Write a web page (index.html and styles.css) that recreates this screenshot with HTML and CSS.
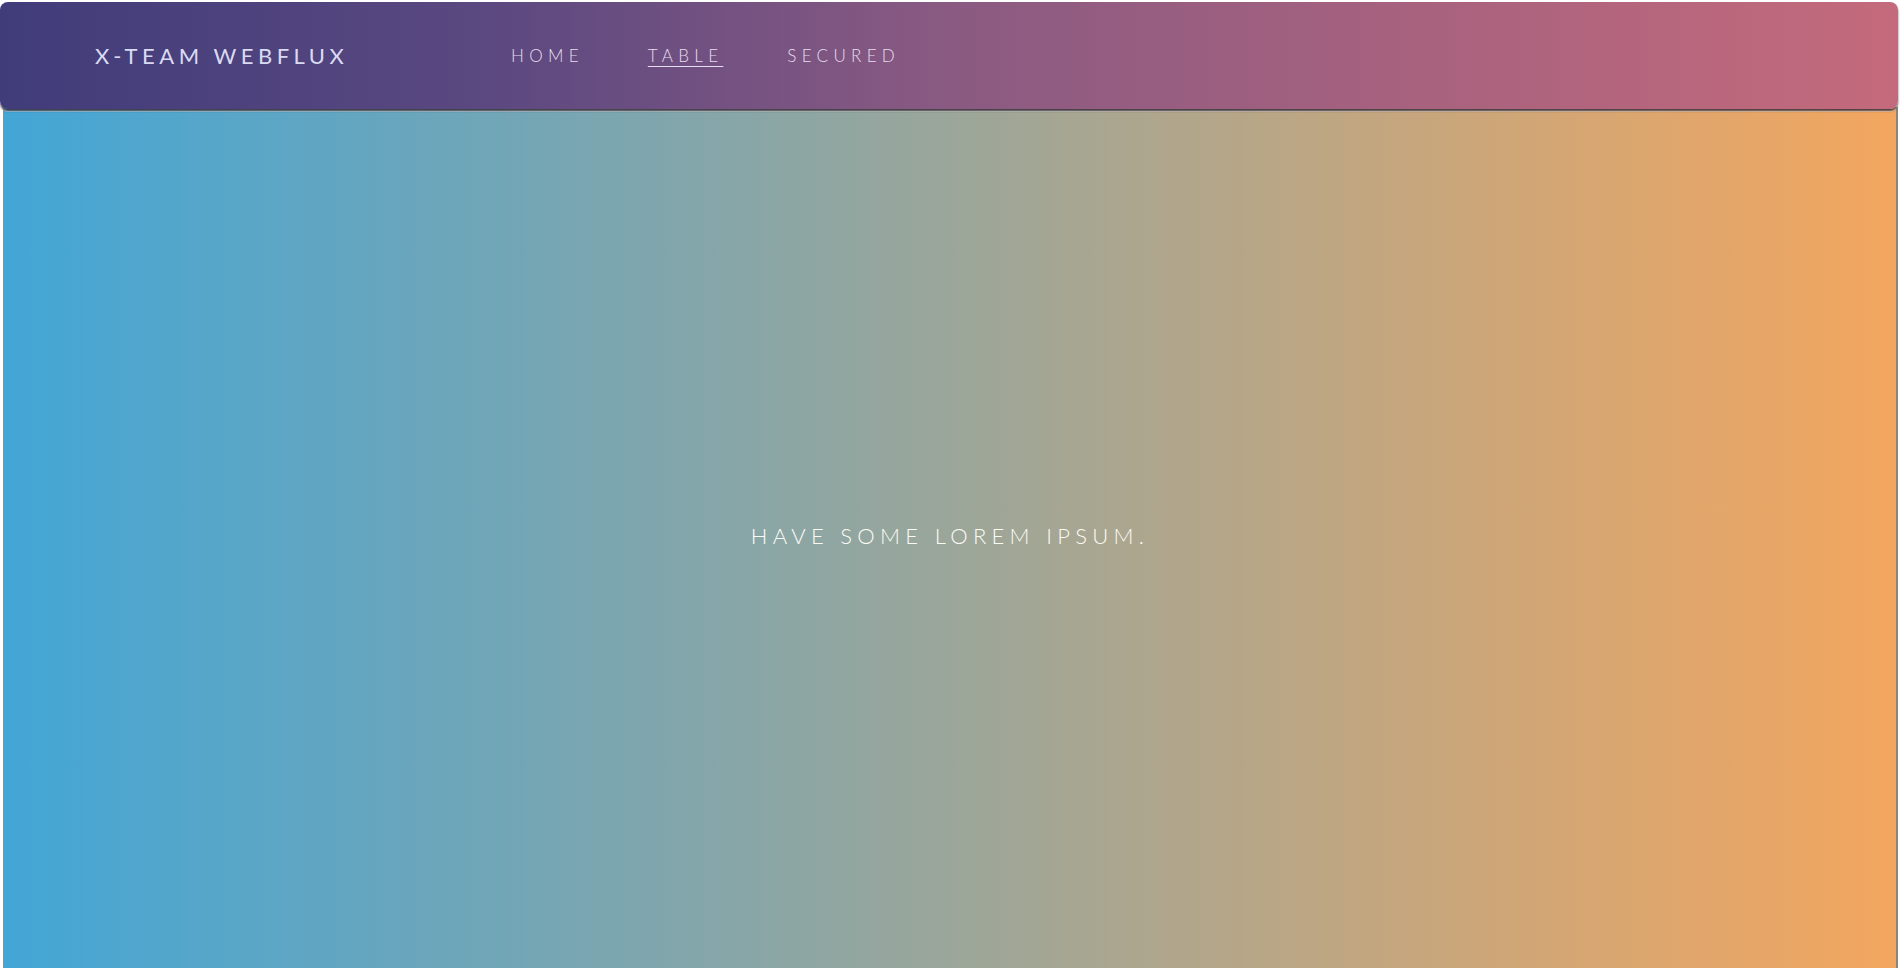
FILE: index.html
```html
<!DOCTYPE html>
<html>
<head>
<meta charset="utf-8">
<link rel="stylesheet" href="styles.css">
</head>
<body>
<div class="page">
  <header class="navbar">
    <div class="brand">X-TEAM WEBFLUX</div>
    <nav class="links">
      <a class="link" href="#">HOME</a>
      <a class="link active" href="#">TABLE</a>
      <a class="link" href="#">SECURED</a>
    </nav>
  </header>
  <main class="hero">
    <p class="tagline">HAVE SOME LOREM IPSUM.</p>
  </main>
</div>
</body>
</html>
```

FILE: styles.css
```css
html, body {
  margin: 0;
  padding: 0;
  background: #ffffff;
  height: 100%;
  overflow: hidden;
}
.page {
  display: flex;
  flex-direction: column;
  height: 968px;
  width: 1898px;
  position: relative;
}
.navbar {
  position: relative;
  z-index: 2;
  margin-top: 2px;
  height: 107px;
  width: 1898px;
  box-sizing: border-box;
  border-radius: 8px;
  background: linear-gradient(to right, #403c7a 0%, #5a4880 25%, #8a5a82 50%, #a8627e 75%, #c46a7c 100%);
  box-shadow: 0 2px 2px rgba(20, 10, 20, 0.75), 0 3px 0 rgba(255,255,255,0.5);
  display: flex;
  align-items: center;
  padding-left: 95px;
  font-family: "Lato", "Open Sans", sans-serif;
}
.brand {
  color: #d9dbf3;
  font-size: 22px;
  letter-spacing: 4.5px;
  width: 416px;
}
.links {
  display: flex;
  gap: 64px;
}
.link {
  color: #e6def0;
  font-size: 17px;
  font-weight: 300;
  letter-spacing: 5.3px;
  text-decoration: none;
}
.link.active {
  text-decoration: underline;
  text-underline-offset: 4px;
  text-decoration-thickness: 1px;
}
.hero {
  flex: 1;
  margin-left: 3px;
  border-left: 1px solid #8d8d8d;
  border-right: 2px solid #8a847c;
  background: linear-gradient(to right, #43a6d6 0%, #9ba69a 50%, #f3a65f 100%);
  display: flex;
  align-items: center;
  justify-content: center;
  margin-top: -2px;
  padding-bottom: 5px;
}
.tagline {
  margin: 0;
  color: #fafaf4;
  font-family: "Lato", "Open Sans", sans-serif;
  font-weight: 300;
  font-size: 22px;
  letter-spacing: 5.3px;
}
```
